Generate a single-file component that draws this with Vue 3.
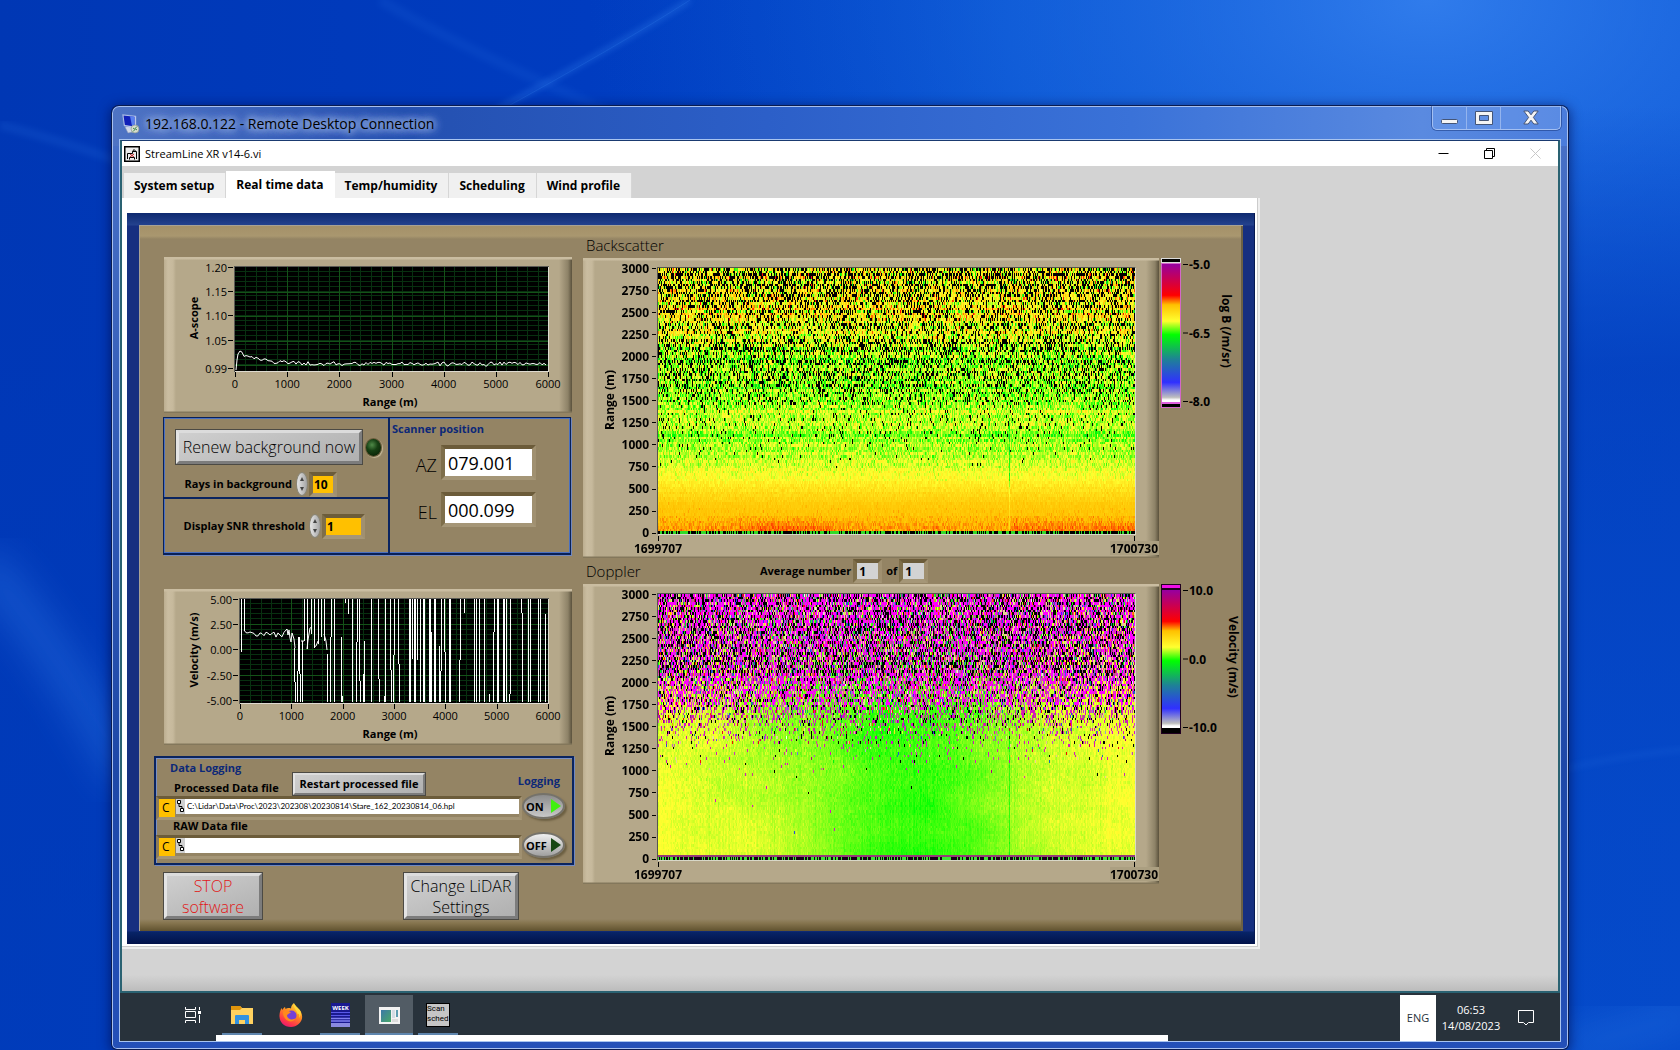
<script setup>
import { onMounted, ref } from 'vue'

const tabs = ['System setup', 'Real time data', 'Temp/humidity', 'Scheduling', 'Wind profile']
const activeTab = ref('Real time data')

const rays = ref('10')
const snr = ref('1')
const az = ref('079.001')
const el = ref('000.099')
const processedFile = ref('C:\\Lidar\\Data\\Proc\\2023\\202308\\20230814\\Stare_162_20230814_06.hpl')
const rawFile = ref('')
const loggingOn = ref(true)
const rawOn = ref(false)

// small seeded generator so the noise is the same on every load
function makeRandom(seed) {
  let s = seed
  return () => {
    s = (s + 0x6d2b79f5) | 0
    let t = Math.imul(s ^ (s >>> 15), 1 | s)
    t = (t + Math.imul(t ^ (t >>> 7), 61 | t)) ^ t
    return ((t ^ (t >>> 14)) >>> 0) / 4294967296
  }
}

function range(n) {
  return Array.from({ length: n }, (_, i) => i)
}

// ---- line charts ----
const scopeY = [
  { y: 11, text: '1.20' },
  { y: 35, text: '1.15' },
  { y: 59, text: '1.10' },
  { y: 84, text: '1.05' },
  { y: 112, text: '0.99' }
]
const velocityY = [
  { y: 11, text: '5.00' },
  { y: 36, text: '2.50' },
  { y: 61, text: '0.00' },
  { y: 87, text: '-2.50' },
  { y: 112, text: '-5.00' }
]

function scopeTrace() {
  const rnd = makeRandom(7)
  let d = 'M72 113 L73 103 L74 97 L76 94'
  for (let x = 78; x < 384; x += 2) {
    const base = 106.5 - 11 * Math.exp(-(x - 75) / 22)
    let y = base + (rnd() - 0.5) * 3.4
    if (rnd() > 0.86) y += 1.5
    d += ` L${x} ${y.toFixed(1)}`
  }
  return d
}

function velocityTrace() {
  const rnd = makeRandom(21)
  let d = 'M80 41'
  for (let x = 82; x < 122; x += 2) {
    d += ` L${x} ${(44 + (x - 80) * 0.05 + (rnd() - 0.5) * 6).toFixed(1)}`
  }
  d += ' L123 40 L124 46 L125 41 L126 49 L127 53 L128 44 L130 50 L131 59'
  d += ' M137 52 L140 52 M143 60 L144 51 L146 39 L148 38 M150 58 L152 57 L154 52'
  d += ' M160 45 L162 52 L163 61'
  return d
}

// x, top, bottom, width of each vertical stroke in the plot
const spikes = [
  [1, 0, 53], [4, 0, 32], [54, 49, 83], [55, 83, 103], [57, 72, 103], [58, 38, 72], [59, 38, 75],
  [60, 75, 103], [62, 42, 103], [64, 0, 42], [67, 0, 50], [71, 0, 35], [74, 0, 49], [78, 0, 45],
  [81, 0, 38], [84, 0, 42], [87, 55, 103], [90, 38, 103], [91, 0, 38], [94, 0, 103], [101, 38, 103],
  [102, 97, 103], [105, 0, 4], [108, 0, 15], [112, 0, 103], [116, 43, 103], [117, 0, 43], [119, 0, 82],
  [120, 82, 103], [123, 75, 103, 2], [124, 42, 103], [131, 0, 103], [138, 0, 80], [139, 80, 103],
  [144, 97, 103], [145, 0, 103], [150, 0, 71], [151, 71, 103], [153, 56, 103], [154, 0, 56],
  [158, 0, 65], [159, 65, 103], [169, 0, 103, 2], [172, 0, 60], [174, 0, 103, 2], [177, 0, 61],
  [180, 0, 103], [183, 0, 103, 2], [189, 0, 103, 2], [191, 33, 103], [194, 0, 103, 2], [199, 47, 103],
  [200, 72, 103], [201, 0, 72], [204, 0, 53], [205, 53, 103], [209, 0, 103, 2], [219, 61, 103],
  [220, 0, 61], [224, 0, 14], [234, 0, 103, 1], [236, 0, 103, 1], [239, 0, 103], [244, 0, 103],
  [249, 95, 103], [253, 33, 103], [254, 0, 33], [257, 0, 103, 2], [258, 0, 80], [263, 0, 103, 2],
  [266, 0, 103], [269, 95, 103], [270, 0, 95], [281, 0, 14], [282, 14, 103], [288, 0, 103],
  [290, 0, 103], [298, 0, 103, 1], [300, 0, 103], [305, 15, 103]
]

const charts = {
  scope: { title: 'A-scope', yTicks: scopeY, left: 71, trace: scopeTrace(), spikes: [], major: [26, 50, 75, 99], minor: 4.9 },
  velocity: { title: 'Velocity (m/s)', yTicks: velocityY, left: 76, trace: velocityTrace(), spikes, major: [26, 51, 77], minor: 5.1 }
}

function xStep(chart) {
  return (384 - chart.left) / 6
}

// ---- heat maps ----
const heatTicks = range(13).map((i) => ({ y: 10.5 + i * 22.05, text: String(3000 - i * 250) }))
const heatMaps = ref([])

const palette = [
  [0, [255, 255, 255]],
  [0.02, [190, 190, 190]],
  [0.13, [48, 48, 255]],
  [0.3, [30, 130, 150]],
  [0.48, [0, 255, 0]],
  [0.58, [255, 255, 48]],
  [0.7, [255, 192, 0]],
  [0.77, [255, 0, 0]],
  [1, [150, 0, 160]]
]

function colour(t) {
  const v = Math.min(1, Math.max(0, t))
  for (let i = 1; i < palette.length; i++) {
    if (v <= palette[i][0]) {
      const [a, ca] = palette[i - 1]
      const [b, cb] = palette[i]
      const k = (v - a) / (b - a)
      return ca.map((c, n) => c + (cb[n] - c) * k)
    }
  }
  return palette[palette.length - 1][1]
}

function lerpTable(table, m) {
  for (let i = 1; i < table.length; i++) {
    if (m <= table[i][0]) {
      const [a, va] = table[i - 1]
      const [b, vb] = table[i]
      return va + ((vb - va) * (m - a)) / (b - a)
    }
  }
  return table[table.length - 1][1]
}

function paint(canvas, pixel) {
  const ctx = canvas.getContext('2d')
  const { width, height } = canvas
  const img = ctx.createImageData(width, height)
  for (let y = 0; y < height; y++) {
    for (let x = 0; x < width; x++) {
      const c = pixel(x / width, height - 1 - y, x)
      img.data.set([c[0], c[1], c[2], 255], (y * width + x) * 4)
    }
  }
  ctx.putImageData(img, 0, 0)
}

const bsMean = [[0, 0.71], [120, 0.705], [160, 0.695], [300, 0.685], [450, 0.65], [600, 0.595], [750, 0.57], [1000, 0.55], [1130, 0.53], [1250, 0.56], [1600, 0.53], [2000, 0.55], [2200, 0.58], [2500, 0.61], [3000, 0.61]]
const bsNoise = [[0, 0.014], [300, 0.01], [600, 0.02], [1000, 0.035], [1500, 0.045], [2000, 0.06], [3000, 0.08]]
const bsBlack = [[0, 0], [700, 0], [1000, 0.02], [1200, 0.05], [1450, 0.08], [1600, 0.22], [1900, 0.22], [2150, 0.3], [2300, 0.2], [2600, 0.26], [3000, 0.38]]
const dpNoise = [[0, 0], [900, 0.001], [1100, 0.02], [1300, 0.07], [1500, 0.2], [1650, 0.42], [1800, 0.65], [2100, 0.88], [3000, 0.98]]

function drawBackscatter(canvas) {
  const rnd = makeRandom(162)
  const gauss = () => rnd() + rnd() + rnd() + rnd() - 2
  const rows = range(101).map(() => [gauss(), rnd()])
  paint(canvas, (x, row, px) => {
    const m = row * 30
    if (row === 0) return rnd() < 0.6 ? [0, 0, 0] : [50, 220, 40]
    const sd = lerpTable(bsNoise, m)
    if (rnd() < lerpTable(bsBlack, m) * (0.6 + rows[row][1] * 0.9)) return [0, 0, 0]
    let t = lerpTable(bsMean, m) + rows[row][0] * sd * 0.45 + gauss() * sd * 1.5
    if (m < 240) {
      const hump = Math.exp(-(((x - 0.26) / 0.13) ** 2)) * 1.1 + (x > 0.74 ? 0.9 : 0)
      t += Math.max(0, 1 - m / (120 + hump * 90)) * (0.004 + hump * 0.022)
    }
    if (px === 351 && m < 1300) t -= m < 500 ? 0.06 : 0.08
    if (rnd() < 0.00008) return [190, 30, 0]
    return colour(t)
  })
}

function drawDoppler(canvas) {
  const rnd = makeRandom(814)
  const gauss = () => rnd() + rnd() + rnd() + rnd() - 2
  const cols = range(478).map(() => gauss() * 0.006)
  const rows = range(101).map(() => rnd())
  // coarse random grid, blended, gives the cloudy patches
  const grid = range(600).map(() => gauss())
  const patch = (x, h, scale) => {
    const gx = x * scale
    const gy = h * scale
    const ix = Math.floor(gx)
    const iy = Math.floor(gy)
    const fx = gx - ix
    const fy = gy - iy
    const at = (a, b) => grid[(a * 23 + b * 7) % 600]
    return (at(ix, iy) * (1 - fx) + at(ix + 1, iy) * fx) * (1 - fy) + (at(ix, iy + 1) * (1 - fx) + at(ix + 1, iy + 1) * fx) * fy
  }
  paint(canvas, (x, row, px) => {
    const m = row * 30
    if (row === 0) return rnd() < 0.55 ? [20, 0, 20] : [60, 230, 50]
    if (row === 1) return [150, 60, 120]
    if (rnd() < lerpTable(dpNoise, m)) {
      const r = rnd()
      const dark = m > 2100 ? 0.2 + rows[row] * 0.16 : 0.08 + rows[row] * 0.16
      if (r < dark) return [0, 0, 0]
      if (r < 0.4 + m / 12000) return m > 1700 ? [255, 0, 255] : [215, 20, 190]
      if (r < 0.74) return [175 + rnd() * 50, 40 + rnd() * 60, 130 + rnd() * 70]
      if (r < 0.84) return [235, 190 + rnd() * 40, 150]
      return colour(rnd())
    }
    // slow change from updraught to still air and back
    const h = m / 3000
    const centre = 0.54 - h * 0.04
    const wide = x < centre ? 0.28 : 0.27
    let t = 0.583 - 0.082 * Math.exp(-(Math.abs((x - centre) / wide) ** 2))
    t += patch(x, h, 9) * 0.01 + patch(x, h, 21) * 0.006 - (x < 0.3 ? h * 0.02 : 0)
    t += gauss() * (0.008 + h * 0.018) + cols[px]
    if (px === 351 && m < 1500) t -= 0.045
    return colour(Math.max(0.478, t))
  })
}

const bars = [
  { id: 'bs', ticks: ['-5.0', '-6.5', '-8.0'], title: 'log B (/m/sr)', titleX: 61, top: '#000', edge: '#dcdcdc', frame: '#d468c8', low: '#e060e0' },
  { id: 'dp', ticks: ['10.0', '0.0', '-10.0'], title: 'Velocity (m/s)', titleX: 68, top: '#f010e8', edge: '#200020', frame: '#200020', low: '#000' }
]
const barStops = palette.map(([t, c]) => ({ at: 1 - t, color: `rgb(${c.join(',')})` })).reverse()

onMounted(() => {
  drawBackscatter(heatMaps.value[0])
  drawDoppler(heatMaps.value[1])
})
</script>

<template>
  <div class="desktop">
    <svg class="wallpaper" viewBox="0 0 1680 1050" preserveAspectRatio="none" aria-hidden="true">
      <defs>
        <linearGradient id="sky" x1="0" y1="0" x2="1" y2="0">
          <stop offset="0" stop-color="#0037b4" />
          <stop offset="0.35" stop-color="#003cc0" />
          <stop offset="0.6" stop-color="#0450cf" />
          <stop offset="1" stop-color="#0a55d4" />
        </linearGradient>
        <radialGradient id="glow" cx="0.85" cy="0" r="0.5">
          <stop offset="0" stop-color="#3a86f2" stop-opacity="0.8" />
          <stop offset="0.5" stop-color="#2471e6" stop-opacity="0.4" />
          <stop offset="1" stop-color="#0a50d0" stop-opacity="0" />
        </radialGradient>
        <linearGradient id="fall" x1="0" y1="0" x2="0" y2="1">
          <stop offset="0.1" stop-color="#0038b8" stop-opacity="0" />
          <stop offset="0.35" stop-color="#0038b8" stop-opacity="0.65" />
          <stop offset="1" stop-color="#0040c0" stop-opacity="0.5" />
        </linearGradient>
        <filter id="soft"><feGaussianBlur stdDeviation="3" /></filter>
        <filter id="softer"><feGaussianBlur stdDeviation="20" /></filter>
      </defs>
      <rect width="1680" height="1050" fill="url(#sky)" />
      <rect width="1680" height="1050" fill="url(#glow)" />
      <rect width="1680" height="1050" fill="url(#fall)" />
      <g fill="none" stroke="#3c8cf5">
        <path d="M380 0 Q480 60 700 150" stroke-width="10" opacity="0.1" filter="url(#soft)" />
        <path d="M690 0 Q620 45 440 140" stroke-width="4" opacity="0.4" filter="url(#soft)" />
        <path d="M690 0 Q620 45 490 116" stroke-width="1" opacity="0.2" />
        <path d="M0 125 Q60 140 130 165" stroke-width="8" opacity="0.14" filter="url(#soft)" />
        <path d="M-20 560 Q60 650 130 780" stroke-width="30" opacity="0.4" filter="url(#softer)" />
        <path d="M1560 770 Q1620 755 1700 748" stroke-width="3" opacity="0.2" filter="url(#soft)" />
        <path d="M1560 1050 Q1620 1035 1700 1010" stroke-width="30" opacity="0.3" filter="url(#softer)" />
      </g>
    </svg>

    <main class="window">
      <header class="window-title">
        <svg class="rdp-icon" width="18" height="20" viewBox="0 0 18 20" aria-hidden="true">
          <path d="M3 13 L13 11 L16 17 L6 19 Z" fill="#d0d8e8" stroke="#8090b0" stroke-width="0.5" />
          <path d="M0.500 0.500 L14 2 V14 L2 12 Z" fill="#c8d4f0" stroke="#8ca4d8" stroke-width="0.5" />
          <path d="M1.500 1.500 L12.500 2.800 V12.500 L2.800 11 Z" fill="#1020b8" />
          <path d="M8 2.300 L12.500 2.800 V12.500 L10 12 Z" fill="#5880f0" />
          <circle cx="13" cy="15" r="4" fill="#d6dccf" stroke="#8a9a90" stroke-width="0.7" />
          <path d="M11 14 l2 1.500 l-2 2 M15 12.500 l-2 2 l2 1.500" fill="none" stroke="#3f8a4a" />
        </svg>
        <h1>192.168.0.122 - Remote Desktop Connection</h1>
        <div class="caption-buttons">
          <button type="button" class="cap-min" aria-label="Minimize">
            <svg width="17" height="15" viewBox="0 0 17 15"><rect x="0.5" y="9.5" width="16" height="4" rx="1" fill="#f4f4f4" stroke="#445577" /></svg>
          </button>
          <button type="button" class="cap-max" aria-label="Maximize">
            <svg width="18" height="15" viewBox="0 0 18 15"><path d="M0.5 1.5 H17.5 V14.5 H0.5 Z M4.5 5.5 V10.5 H13.5 V5.5 Z" fill="#f4f4f4" fill-rule="evenodd" stroke="#445577" /></svg>
          </button>
          <button type="button" class="cap-close" aria-label="Close">
            <svg width="16" height="15" viewBox="0 0 16 15"><path d="M0.8 1 H5.2 L8 4.8 L10.8 1 H15.2 L10.4 7.4 L15.2 14 H10.8 L8 10.2 L5.2 14 H0.8 L5.6 7.4 Z" fill="#f4f4f4" stroke="#445577" /></svg>
          </button>
        </div>
      </header>

      <div class="client">
        <section class="app">
          <header class="app-title">
            <svg width="16" height="16" viewBox="0 0 16 16" aria-hidden="true">
              <rect x="0.75" y="0.75" width="14.5" height="14.5" fill="#ececec" stroke="#000" stroke-width="1.5" />
              <path d="M3.500 13 V7.500 H8.500 V5.500 L10 3.500 L12.500 6 V13 M5.500 13.500 V11.500 H10.500 V13.500 M8.500 5.500 H12.500" fill="none" stroke="#000" />
              <path d="M6 8 L10 11 M10 8 L6 11" stroke="#c02020" />
            </svg>
            <h2>StreamLine XR v14-6.vi</h2>
            <button type="button" aria-label="Minimize app">
              <svg width="11" height="11" viewBox="0 0 11 11"><path d="M0.5 5.5 H10.5" stroke="#000" /></svg>
            </button>
            <button type="button" aria-label="Restore app">
              <svg width="11" height="11" viewBox="0 0 11 11" fill="none" stroke="#000"><path d="M0.5 2.5 H8.5 V10.5 H0.5 Z M2.5 2.5 V0.5 H10.5 V8.5 H8.5" /></svg>
            </button>
            <button type="button" aria-label="Close app">
              <svg width="11" height="11" viewBox="0 0 11 11"><path d="M0.5 0.5 L10.5 10.5 M10.5 0.5 L0.5 10.5" stroke="#c8c8c8" /></svg>
            </button>
          </header>

          <nav class="tabs">
            <button
              v-for="tab in tabs"
              :key="tab"
              type="button"
              :class="{ active: tab === activeTab }"
              @click="activeTab = tab"
            >
              {{ tab }}
            </button>
          </nav>

          <div class="page">
            <div class="frame">
              <div class="board">
                <div class="left">
                  <svg
                    v-for="(chart, key) in charts"
                    :key="key"
                    class="panel line-chart"
                    :class="key"
                    viewBox="0 0 408 156"
                  >
                    <rect :x="chart.left - 1" y="9" :width="386 - chart.left" height="106" fill="#5a5a55" />
                    <rect :x="chart.left" y="10" :width="385 - chart.left" height="105" fill="#dedad0" />
                    <rect :x="chart.left" y="10" :width="384 - chart.left" height="104" fill="#000" />
                    <g fill="#083010">
                      <rect v-for="i in 29" :key="'v' + i" :x="Math.round(chart.left + (i * xStep(chart)) / 5)" y="10" width="1" height="104" />
                      <rect v-for="i in 20" :key="'h' + i" :x="chart.left" :y="Math.round(9 + i * chart.minor)" :width="384 - chart.left" height="1" />
                    </g>
                    <g fill="#145218">
                      <rect v-for="i in 5" :key="'V' + i" :x="Math.round(chart.left + i * xStep(chart))" y="10" width="1" height="104" />
                      <rect v-for="g in chart.major" :key="'H' + g" :x="chart.left" :y="9 + g" :width="384 - chart.left" height="1" />
                    </g>
                    <path :d="chart.trace" fill="none" stroke="#fff" />
                    <g fill="#fff">
                      <rect v-for="(s, i) in chart.spikes" :key="i" :x="chart.left + s[0]" :y="10 + s[1]" :width="s[3] || 1" :height="s[2] - s[1]" />
                    </g>
                    <g class="tick-text">
                      <template v-for="t in chart.yTicks" :key="t.text">
                        <text :x="chart.left - 8" :y="t.y + 4" text-anchor="end">{{ t.text }}</text>
                        <rect :x="chart.left - 7" :y="t.y - 1" width="5" height="1" />
                      </template>
                      <template v-for="i in 7" :key="i">
                        <rect :x="Math.round(chart.left + (i - 1) * xStep(chart))" y="115" width="1" height="5" />
                        <text :x="chart.left + (i - 1) * xStep(chart)" y="131" text-anchor="middle">{{ (i - 1) * 1000 }}</text>
                      </template>
                    </g>
                    <g class="axis-title">
                      <text x="226" y="149" text-anchor="middle">Range (m)</text>
                      <text transform="translate(34 61) rotate(-90)" text-anchor="middle">{{ chart.title }}</text>
                    </g>
                  </svg>

                  <div class="scanner">
                    <div class="cell renew">
                      <div class="renew-row">
                        <button type="button" class="metal big">Renew background now</button>
                        <span class="led"></span>
                      </div>
                      <div class="number-row">
                        <label for="rays">Rays in background</label>
                        <span class="spin"><i></i><i></i></span>
                        <input id="rays" v-model="rays" class="amber short" />
                      </div>
                    </div>
                    <div class="cell snr">
                      <div class="number-row">
                        <label for="snr">Display SNR threshold</label>
                        <span class="spin"><i></i><i></i></span>
                        <input id="snr" v-model="snr" class="amber" />
                      </div>
                    </div>
                    <div class="cell position">
                      <h3>Scanner position</h3>
                      <div class="readout"><label for="az">AZ</label><input id="az" v-model="az" /></div>
                      <div class="readout"><label for="el">EL</label><input id="el" v-model="el" /></div>
                    </div>
                  </div>

                  <div class="logging">
                    <div class="log-head">
                      <div>
                        <h3>Data Logging</h3>
                        <label for="proc">Processed Data file</label>
                      </div>
                      <button type="button" class="metal small">Restart processed file</button>
                      <h3>Logging</h3>
                    </div>
                    <div class="path-row">
                      <div class="path-box">
                        <span class="drive">C</span>
                        <svg width="9" height="15" viewBox="0 0 9 15" aria-hidden="true">
                          <rect width="9" height="15" fill="#d0d0d0" />
                          <path d="M3 4.500 V7.500 H6 V9.500" fill="none" stroke="#000" />
                          <path d="M1.500 1.500 h3 v3 h-3 Z M4.500 9.500 h3 v3 h-3 Z" fill="#fff" stroke="#000" />
                        </svg>
                        <input id="proc" v-model="processedFile" />
                      </div>
                      <button type="button" class="toggle" :class="{ lit: loggingOn }" :aria-pressed="loggingOn" @click="loggingOn = !loggingOn">
                        {{ loggingOn ? 'ON' : 'OFF' }}<i></i>
                      </button>
                    </div>
                    <label class="raw-label" for="raw">RAW Data file</label>
                    <div class="path-row">
                      <div class="path-box">
                        <span class="drive">C</span>
                        <svg width="9" height="15" viewBox="0 0 9 15" aria-hidden="true">
                          <rect width="9" height="15" fill="#d0d0d0" />
                          <path d="M3 4.500 V7.500 H6 V9.500" fill="none" stroke="#000" />
                          <path d="M1.500 1.500 h3 v3 h-3 Z M4.500 9.500 h3 v3 h-3 Z" fill="#fff" stroke="#000" />
                        </svg>
                        <input id="raw" v-model="rawFile" />
                      </div>
                      <button type="button" class="toggle" :class="{ lit: rawOn }" :aria-pressed="rawOn" @click="rawOn = !rawOn">
                        {{ rawOn ? 'ON' : 'OFF' }}<i></i>
                      </button>
                    </div>
                  </div>

                  <div class="actions">
                    <button type="button" class="metal big stop">STOP<br />software</button>
                    <button type="button" class="metal big change">Change LiDAR<br />Settings</button>
                  </div>
                </div>

                <div class="right">
                  <template v-for="(bar, n) in bars" :key="bar.id">
                    <div v-if="n === 0" class="map-head"><h3>Backscatter</h3></div>
                    <div v-else class="map-head">
                      <h3>Doppler</h3>
                      <label for="avg">Average number</label>
                      <input id="avg" value="1" readonly />
                      <label for="avg-total">of</label>
                      <input id="avg-total" value="1" readonly />
                    </div>
                    <div class="map-row">
                      <div class="panel heat">
                        <canvas ref="heatMaps" width="477" height="101"></canvas>
                        <svg viewBox="0 0 576 300">
                          <g class="heat-text">
                            <template v-for="t in heatTicks" :key="t.text">
                              <text x="66" :y="t.y + 4" text-anchor="end">{{ t.text }}</text>
                              <rect x="69" :y="Math.round(t.y - 0.5)" width="4" height="1" />
                            </template>
                            <text x="75" y="295" text-anchor="middle">1699707</text>
                            <rect x="527" y="283" width="49" height="14" fill="#ab9f81" />
                            <text x="551" y="295" text-anchor="middle">1700730</text>
                            <rect x="75" y="278" width="1" height="5" />
                            <rect x="551" y="278" width="1" height="5" />
                            <text transform="translate(31 142) rotate(-90)" text-anchor="middle">Range (m)</text>
                          </g>
                        </svg>
                      </div>
                      <svg class="colour-bar" width="82" height="152" viewBox="0 0 82 152">
                        <defs>
                          <linearGradient :id="'ramp-' + bar.id" x1="0" y1="0" x2="0" y2="1">
                            <stop v-for="s in barStops" :key="s.at" :offset="s.at" :stop-color="s.color" />
                          </linearGradient>
                        </defs>
                        <rect width="20" height="150" :fill="bar.frame" />
                        <rect width="20" height="5" :fill="bar.edge" />
                        <rect x="1" y="1" width="18" height="3" :fill="bar.top" />
                        <rect x="1" y="6" width="18" height="136" :fill="'url(#ramp-' + bar.id + ')'" />
                        <rect x="1" y="142" width="18" height="2" fill="#fff" />
                        <rect x="1" y="144" width="18" height="2" :fill="bar.low" />
                        <rect x="1" y="146" width="18" height="3" fill="#000" />
                        <g class="heat-text">
                          <template v-for="(t, i) in bar.ticks" :key="t">
                            <rect x="22" :y="6 + i * 68.5" width="5" height="1" />
                            <text x="28" :y="11 + i * 68.5">{{ t }}</text>
                          </template>
                          <text :transform="`translate(${bar.titleX} 73) rotate(90)`" text-anchor="middle">{{ bar.title }}</text>
                        </g>
                      </svg>
                    </div>
                  </template>
                </div>
              </div>
            </div>
          </div>
        </section>

        <footer class="taskbar">
          <button type="button" aria-label="Task view">
            <svg width="16" height="16" viewBox="0 0 16 16" fill="none" stroke="#fff"><path d="M0.5 0 V2.5 H10.5 V0 M0.5 4.5 H10.5 V10.5 H0.5 Z M0.5 16 V13.5 H10.5 V16 M14.5 0 V3 M14.5 8 V16" /><rect x="13" y="4" width="3" height="3" fill="#fff" stroke="none" /></svg>
          </button>
          <button type="button" class="running" aria-label="File Explorer">
            <svg width="22" height="20" viewBox="0 0 22 20"><path d="M0 1 H9 L11 3 H22 V19 H0 Z" fill="#ffd260" /><path d="M0 1 H9 L11 3 L9 5 H0 Z" fill="#e0950c" /><path d="M4 19 V11 Q4 10 5 10 H17 Q18 10 18 11 V19 H14 V15 H8 V19 Z" fill="#3292e0" /></svg>
          </button>
          <button type="button" aria-label="Firefox">
            <svg width="24" height="24" viewBox="0 0 24 24">
              <defs>
                <linearGradient id="fox" x1="0.8" y1="0" x2="0.3" y2="1"><stop offset="0" stop-color="#ffe040" /><stop offset="0.45" stop-color="#ff8a20" /><stop offset="0.8" stop-color="#ff3848" /><stop offset="1" stop-color="#e81870" /></linearGradient>
              </defs>
              <path d="M15 0 C16 3 21 6 22 9 C26 17 19 24 12 24 C5 24 0 19 0.5 12 C0.7 9 1.5 7 2.5 5 L3.5 7 C4 5.500 5 4.500 6 4 L6.500 6 C9 4.800 10 5 12 5.500 C12 3 13.500 1 15 0 Z" fill="url(#fox)" />
              <circle cx="12.500" cy="12.500" r="5" fill="#7640d8" />
              <path d="M4 9 C7 6 10 8 12 9.500 C10 10 10 11 8 12 C8 16 13 18 17 15 C14 21 4 19 4 9 Z" fill="#ff8a1c" />
              <path d="M15 1 C14 5 18 7 18.500 11 C20 10 21 12 20 15 C24 10 21 7 18 4.500 Z" fill="#ffd83c" />
            </svg>
          </button>
          <button type="button" class="running" aria-label="Week">
            <svg width="19" height="24" viewBox="0 0 19 24">
              <rect width="19" height="24" fill="#1a1a90" />
              <path d="M0 9.500 H19 M0 12.500 H19" stroke="#5a5ae8" />
              <path d="M0 15.500 H19 M0 18 H19" stroke="#8080f0" stroke-width="1.500" />
              <rect y="20" width="19" height="4" fill="#8a8ae0" />
              <text x="9.500" y="7" text-anchor="middle" class="week">WEEK</text>
            </svg>
          </button>
          <button type="button" class="running current" aria-label="StreamLine">
            <svg width="21" height="17" viewBox="0 0 21 17">
              <defs><linearGradient id="pane" x1="0" y1="0" x2="1" y2="1"><stop offset="0" stop-color="#3c78a8" /><stop offset="1" stop-color="#48a868" /></linearGradient></defs>
              <rect width="21" height="17" fill="#f2f2f2" /><rect x="2" y="3" width="10" height="12" fill="url(#pane)" /><rect x="13" y="3" width="3" height="8" fill="#d4dce4" /><rect x="17" y="3" width="2" height="7" fill="#5c9cb0" /><rect x="13" y="12" width="6" height="3" fill="#dcdcdc" />
            </svg>
          </button>
          <button type="button" class="running" aria-label="Scan sched">
            <span class="scan">Scan<br />sched</span>
          </button>
          <div class="tray">
            <span class="lang">ENG</span>
            <span class="clock">06:53<br />14/08/2023</span>
            <button type="button" aria-label="Notifications">
              <svg width="16" height="16" viewBox="0 0 16 16"><path d="M0.500 0.500 H15.500 V12.500 H10.500 L8 15 L5.500 12.500 H0.500 Z" fill="none" stroke="#fff" /></svg>
            </button>
          </div>
          <div class="scroll-strip"></div>
        </footer>
      </div>
    </main>
  </div>
</template>

<style>
body {
  background: #0040c0;
}
</style>

<style scoped>
* {
  box-sizing: border-box;
}

.desktop {
  position: relative;
  min-height: 100vh;
  padding: 106px 112px 1px;
  display: flex;
  flex-direction: column;
  font-family: 'Open Sans', 'Noto Sans', sans-serif;
  font-size: 12px;
  color: #000;
}

.wallpaper {
  position: absolute;
  inset: 0;
  width: 100%;
  height: 100%;
}

h1,
h2,
h3 {
  margin: 0;
  font-weight: normal;
}

button,
input {
  margin: 0;
  padding: 0;
  border: 0;
  border-radius: 0;
  background: none;
  font: inherit;
  color: inherit;
}

svg {
  display: block;
}

/* remote desktop window */
.window {
  position: relative;
  flex: 1;
  display: flex;
  flex-direction: column;
  padding: 0 7px 7px;
  border-radius: 7px 7px 5px 5px;
  background: linear-gradient(90deg, #4f74c4 0, #2450b0 20%, #2c5fc8 45%, #3a72d8 70%, #5a8ae0 90%, #4a7cdc 100%) top / 100% 40px no-repeat,
    linear-gradient(180deg, #4a72c8 0, #1e48a8 70%, #2450b8 100%);
  box-shadow: inset 0 0 0 1px #a8c0ee, 0 0 0 1px #0a1c50, 0 2px 12px 2px rgba(0, 10, 70, 0.6);
}

.window-title {
  height: 33px;
  display: flex;
  align-items: center;
  padding: 3px 0 0 3px;
}

.window-title h1 {
  flex: 1;
  padding-left: 5px;
  font-size: 14px;
  line-height: 20px;
  text-shadow: 0 0 6px #8ea8de, 0 0 8px #8ea8de, 0 0 8px #8ea8de, 0 0 12px #8ea8de, 0 0 12px #8ea8de, 0 0 14px #8ea8de;
}

.caption-buttons {
  align-self: flex-start;
  display: flex;
  height: 24px;
  margin-top: -3px;
  border: 1px solid #a4c0f2;
  border-top: 0;
  border-radius: 0 0 5px 5px;
  box-shadow: 0 0 0 1px rgba(20, 50, 120, 0.5);
  background: rgba(120, 165, 240, 0.35);
}

.caption-buttons button {
  display: flex;
  align-items: center;
  justify-content: center;
  width: 34px;
  border-right: 1px solid #94b4ee;
}

.caption-buttons .cap-close {
  width: 59px;
  border-right: 0;
}

.client {
  flex: 1;
  display: flex;
  flex-direction: column;
  border: 1px solid #a8c4f0;
}

.app {
  flex: 1;
  display: flex;
  flex-direction: column;
  border: 2px solid #2a6272;
  border-top: 1px solid #1a3a70;
  background: linear-gradient(0deg, #bcbcbc 0, #d3d3d3 16px);
}

.app-title {
  height: 25px;
  display: flex;
  align-items: center;
  padding-left: 2px;
  background: #fff;
}

.app-title h2 {
  flex: 1;
  padding-left: 5px;
  font-size: 11px;
  line-height: 16px;
}

.app-title button {
  width: 46px;
  height: 23px;
  display: flex;
  align-items: center;
  justify-content: center;
}

.tabs {
  display: flex;
  align-items: flex-end;
  height: 32px;
  padding-left: 2px;
}

.tabs button {
  height: 25px;
  padding: 0 11px 0 10px;
  border-right: 1px solid #d6d6d6;
  background: #f0f0f0;
  font-size: 12px;
  font-weight: bold;
  line-height: 26px;
  white-space: nowrap;
}

.tabs .active {
  height: 27px;
  background: #fff;
  border: 0;
  line-height: 24px;
}

.page {
  width: 100%;
  max-width: 1138px;
  padding: 15px 3px 3px 5px;
  background: #fff;
  border-right: 2px solid #eee;
  border-bottom: 2px solid #eee;
  box-shadow: inset -1px -1px 0 #ccc;
}

.frame {
  padding: 12px 12px 13px;
  background: linear-gradient(180deg, #0e2a70 0, #24428e 12px, #162f80 13px, #162f80 calc(100% - 13px), #082468 calc(100% - 12px), #02124a 100%);
  box-shadow: inset -1px 0 #061850;
}

.board {
  display: flex;
  gap: 9px;
  padding: 0 0 11px 15px;
  background: linear-gradient(180deg, #a49068 0, #a9976f 11px, #948464 14px, #948464 calc(100% - 12px), #86754f calc(100% - 8px), #60522f 100%);
  box-shadow: inset 1px 1px #a8a294, inset -2px 0 #6c6144;
}

.left {
  flex: none;
  width: 420px;
  display: flex;
  flex-direction: column;
  padding-top: 32px;
}

.left .scope { order: 1; }
.left .scanner { order: 2; }
.left .velocity { order: 3; }
.left .logging { order: 4; }
.left .actions { order: 5; }

.panel {
  background: linear-gradient(180deg, #cabda1 0, #cabda1 2px, transparent 3px),
    linear-gradient(0deg, #83775b 0, #83775b 1px, transparent 2px),
    linear-gradient(90deg, #bcae90 0, #cabda1 4px, #c6b99c 9px, #b5a88a 12px, #b5a88a calc(100% - 13px), #8d8267 calc(100% - 4px), #5a513c 100%);
}

.line-chart {
  width: 408px;
  height: 156px;
  margin-left: 10px;
}

.tick-text {
  font-size: 11px;
}

.axis-title {
  font-size: 11px;
  font-weight: bold;
}

.heat-text {
  font-size: 12px;
  font-weight: bold;
}

/* scanner block */
.scanner {
  display: grid;
  grid-template-columns: 226px 1fr;
  grid-template-rows: 81px 54px;
  width: 408px;
  margin: 4px 0 34px 9px;
  border: 1px solid #082058;
  border-bottom-width: 2px;
  box-shadow: inset 1px 1px #4a70c0, inset -1px -1px #4a70c0, 1px 1px #7088c0;
}

.cell {
  border-right: 2px solid #0a2460;
}

.renew {
  padding: 11px 0 0 11px;
  border-bottom: 2px solid #0a2460;
}

.snr {
  padding-top: 15px;
}

.position {
  grid-column: 2;
  grid-row: 1 / 3;
  padding: 1px 0 0 2px;
  border: 0;
}

.renew-row {
  display: flex;
  align-items: center;
  gap: 2px;
}

.metal {
  display: block;
  border: 4px solid;
  border-color: #dcdcdc #7c7c7c #7c7c7c #e4e4e4;
  outline: 1px solid #4c4a44;
  outline-offset: -1px;
  background: linear-gradient(160deg, #cfcfcf, #b0b0b0);
  white-space: nowrap;
}

.big {
  font-size: 16px;
  font-weight: 300;
  line-height: 21px;
}

.renew .big {
  width: 188px;
  height: 36px;
}

.led {
  width: 17px;
  height: 19px;
  border-radius: 50%;
  border: 1px solid #6a5c3c;
  background: radial-gradient(circle at 40% 35%, #4f8a48 0, #174014 40%, #0c2808 75%);
  box-shadow: 1px 1px 1px #c4b898;
}

.number-row {
  display: flex;
  align-items: center;
  justify-content: flex-end;
  height: 24px;
  margin-right: 51px;
}

.renew .number-row {
  margin-top: 7px;
}

.snr .number-row {
  margin-right: 23px;
}

.number-row label,
.log-head label,
.raw-label,
.map-head label,
.log-head h3,
.position h3 {
  font-size: 11px;
  font-weight: bold;
  line-height: 20px;
  white-space: nowrap;
}

.position h3,
.log-head h3 {
  color: #0c2878;
}

.spin {
  display: flex;
  flex-direction: column;
  justify-content: center;
  align-items: center;
  gap: 6px;
  width: 12px;
  height: 24px;
  margin: 0 1px 0 4px;
  border-radius: 50%;
  border: 1px solid #8a8676;
  background: linear-gradient(90deg, #e6e6e6, #a4a4a4);
}

.spin i {
  border: 2px solid transparent;
  border-top: 0;
  border-bottom: 4px solid #444;
}

.spin i + i {
  border-bottom: 0;
  border-top: 4px solid #444;
}

.scanner input,
.map-head input {
  border: 4px solid;
  border-color: #6c5c3a #a09070 #a59677 #7e6e4a;
  background: #fff;
}

.number-row .amber {
  width: 43px;
  height: 25px;
  padding-left: 1px;
  background: #ffc000;
  font-weight: bold;
}

.number-row .short {
  width: 28px;
}

.readout {
  display: flex;
  align-items: center;
  justify-content: flex-end;
  gap: 4px;
  margin: 6px 34px 12px 0;
  font-size: 18px;
}

.readout label {
  padding-top: 5px;
  font-weight: 300;
}

.readout input {
  width: 95px;
  height: 35px;
  padding-left: 3px;
}

/* data logging */
.logging {
  height: 109px;
  margin-top: 11px;
  border: 2px solid #0a2460;
  box-shadow: inset 1px 1px #7a90c4, 1px 1px #7088c0;
}

.log-head {
  display: grid;
  grid-template-columns: 136px 134px 1fr;
  align-items: center;
  height: 38px;
}

.log-head div {
  padding: 0 0 3px 18px;
  white-space: nowrap;
}

.log-head div h3 {
  margin-left: -4px;
}

.log-head > h3 {
  padding: 3px 12px 0 0;
  text-align: right;
}

.small {
  height: 24px;
  margin-top: 8px;
  border-width: 3px;
  font-size: 11px;
  font-weight: bold;
  line-height: 16px;
}

.path-row {
  display: flex;
  height: 24px;
}

.path-box {
  width: 366px;
  display: flex;
  border: 3px solid;
  border-color: #6c5c3a #a09070 #a59677 #8c7c5a;
}

.drive {
  width: 16px;
  padding-left: 3px;
  background: #ffc000;
  font-size: 12px;
  line-height: 18px;
}

.path-box svg {
  flex: none;
  margin: 0 0 0 1px;
}

.path-box input {
  flex: 1;
  min-width: 0;
  height: 15px;
  padding-left: 2px;
  background: #fff;
  font-family: Lato, sans-serif;
  font-size: 8px;
  line-height: 15px;
}

.toggle {
  display: flex;
  align-items: center;
  justify-content: space-between;
  width: 43px;
  height: 26px;
  margin-top: -3px;
  padding: 0 2px;
  border: 2px solid #75726a;
  border-radius: 50%;
  background: linear-gradient(180deg, #f0f0f0, #a0a0a0);
  box-shadow: 2px 2px 2px #6c5f42;
  font-size: 11px;
  font-weight: bold;
}

.toggle i {
  border-left: 10px solid #174814;
  border-top: 7px solid transparent;
  border-bottom: 7px solid transparent;
}

.toggle.lit {
  background: linear-gradient(180deg, #8c8c8c, #c8c8c8);
}

.toggle.lit i {
  border-left-color: #40f010;
}

.raw-label {
  display: block;
  height: 15px;
  margin-left: 17px;
  line-height: 12px;
}

.actions {
  display: flex;
  justify-content: space-between;
  margin: 7px 55px 0 9px;
}

.actions .big {
  width: 116px;
  height: 48px;
}

.actions .stop {
  width: 100px;
  color: #e01818;
}

/* heat maps */
.right {
  flex: 1;
  padding-top: 7px;
}

.map-head {
  display: flex;
  align-items: center;
  height: 26px;
  padding-left: 3px;
}

.map-head h3 {
  width: 174px;
  font-size: 15px;
  font-weight: 300;
}

.map-head input {
  width: 29px;
  height: 24px;
  margin: 0 4px 0 2px;
  padding-left: 2px;
  background: #d3d3d3;
  font-weight: bold;
}

.map-row {
  display: flex;
  gap: 2px;
}

.heat {
  position: relative;
  width: 576px;
  height: 300px;
  padding: 9px 23px 23px 74px;
}

.heat canvas {
  display: block;
  width: 100%;
  height: 100%;
  border: 1px solid #56564e;
  border-right-color: #d8d8c8;
  border-bottom-color: #d8d8c8;
  image-rendering: pixelated;
}

.heat svg {
  position: absolute;
  inset: 0;
}

.colour-bar {
  flex: none;
  overflow: visible;
}

/* taskbar */
.taskbar {
  position: relative;
  display: flex;
  height: 48px;
  gap: 1px;
  padding: 2px 0 0 49px;
  background: #28323b;
  color: #fff;
}

.taskbar > button {
  display: flex;
  align-items: center;
  justify-content: center;
  width: 48px;
  height: 40px;
}

.taskbar .running {
  background: linear-gradient(#5f86ae, #5f86ae) center bottom / 40px 2px no-repeat;
}

.taskbar .current {
  background: linear-gradient(#5f86ae, #5f86ae) bottom / 100% 2px no-repeat #525c65;
}

.week {
  font-size: 6px;
  font-weight: bold;
  fill: #fff;
}

.scan {
  width: 24px;
  height: 24px;
  border: 1px solid #000;
  background: #c6c6c6;
  color: #000;
  font-family: Roboto, sans-serif;
  font-size: 8px;
  line-height: 10px;
  text-align: left;
}

.tray {
  display: flex;
  align-items: center;
  margin-left: auto;
}

.lang {
  width: 36px;
  height: 46px;
  background: #fff;
  color: #28323b;
  font-size: 11px;
  line-height: 46px;
  text-align: center;
}

.clock {
  width: 70px;
  font-size: 11px;
  line-height: 16px;
  text-align: center;
}

.tray button {
  width: 54px;
  padding: 0 0 0 12px;
}

.scroll-strip {
  position: absolute;
  left: 96px;
  right: 392px;
  bottom: 0;
  height: 6px;
  background: #fff;
}
</style>
